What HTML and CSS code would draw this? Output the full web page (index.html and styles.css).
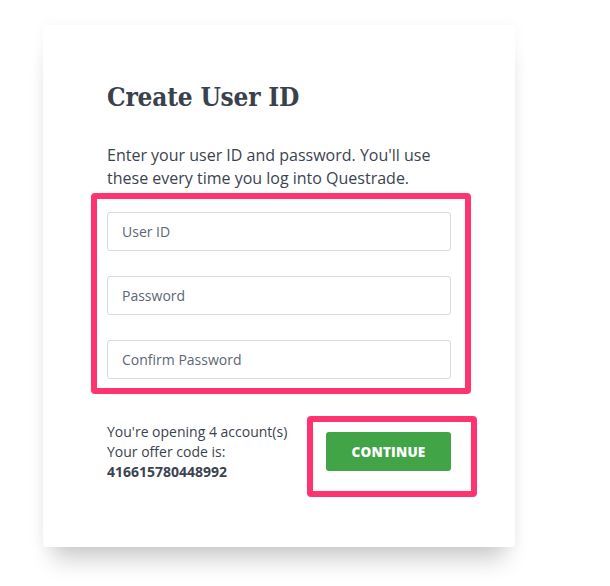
FILE: index.html
```
<!DOCTYPE html>
<html>
<head>
<meta charset="utf-8">
<link rel="stylesheet" href="styles.css">
</head>
<body>
<div class="card">
  <h1 class="title">Create User ID</h1>
  <p class="intro">Enter your user ID and password. You'll use these every time you log into Questrade.</p>
  <div class="highlight fields">
    <div class="input">User ID</div>
    <div class="input">Password</div>
    <div class="input">Confirm Password</div>
  </div>
  <div class="footer">
    <div class="info">
      <div>You're opening 4 account(s)</div>
      <div>Your offer code is:</div>
      <div class="code">416615780448992</div>
    </div>
    <div class="highlight action">
      <button class="btn">CONTINUE</button>
    </div>
  </div>
</div>
</body>
</html>
```
FILE: styles.css
```
html, body {
  margin: 0;
  padding: 0;
  background: #ffffff;
}
body {
  font-family: "Open Sans", "Noto Sans", sans-serif;
  color: #3c4350;
  min-height: 586px;
  padding-top: 25px;
  box-sizing: border-box;
}
.card {
  box-sizing: border-box;
  margin: 0 0 0 43px;
  width: 472px;
  height: 522px;
  padding: 57px 64px 0 64px;
  background: #fff;
  border-radius: 3px;
  box-shadow: 0 0 14px rgba(0,0,0,0.04), 0 22px 22px -10px rgba(0,0,0,0.2);
}
.title {
  margin: 0;
  font-family: "DejaVu Serif Condensed", "DejaVu Serif", serif;
  font-weight: bold;
  font-size: 26px;
  line-height: 30px;
  color: #39414d;
  letter-spacing: -0.2px;
}
.intro {
  margin: 32px 0 0 0;
  font-size: 16px;
  line-height: 23px;
  width: 340px;
}
.highlight {
  border: 6px solid #ff3370;
  border-radius: 4px;
}
.fields {
  box-sizing: border-box;
  width: 380px;
  margin: 3px 0 0 -16px;
  padding: 13px 14px 9px 10px;
  display: flex;
  flex-direction: column;
  gap: 25px;
}
.input {
  box-sizing: border-box;
  height: 39px;
  border: 1px solid #d6d9de;
  border-radius: 3px;
  padding: 0 14px;
  display: flex;
  align-items: center;
  font-size: 14px;
  color: #5d6673;
}
.footer {
  margin-top: 22px;
  display: flex;
  justify-content: space-between;
  margin-right: -26px;
}
.info {
  padding-top: 6px;
  font-size: 14px;
  line-height: 20px;
}
.code {
  font-weight: bold;
}
.action {
  box-sizing: border-box;
  width: 170px;
  height: 81px;
  padding: 10px 20px 20px 13px;
}
.btn {
  display: block;
  width: 125px;
  height: 39px;
  border: none;
  border-radius: 3px;
  background: #41a447;
  color: #fff;
  font-family: "Open Sans", sans-serif;
  font-weight: 800;
  font-size: 13.5px;
  letter-spacing: 0.2px;
  padding: 0;
}
```
